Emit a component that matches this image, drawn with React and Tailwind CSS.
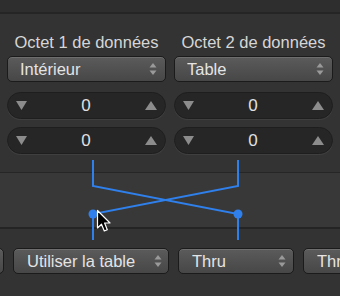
import React from 'react';

const font = { fontFamily: '"Liberation Sans", Arial, sans-serif' };

function Chevrons() {
  return (
    <svg width="8" height="14" viewBox="0 0 8 14" className="shrink-0">
      <path d="M4 1 L7.5 5.5 L0.5 5.5 Z" fill="#9a9a9a" />
      <path d="M4 13 L7.5 8.5 L0.5 8.5 Z" fill="#9a9a9a" />
    </svg>
  );
}

function Popup({ label, className = '' }) {
  return (
    <div
      className={`flex items-center justify-between rounded-[5px] border border-[#1b1b1b] bg-gradient-to-b from-[#5b5b5b] to-[#474747] shadow-[inset_0_1px_0_rgba(255,255,255,0.12)] text-[#e4e4e4] text-[16.5px] leading-none ${className}`}
    >
      <span className="truncate">{label}</span>
      <Chevrons />
    </div>
  );
}

function NumberField({ value }) {
  return (
    <div className="flex h-[27px] items-center justify-between rounded-full border border-[#1e1e1e] bg-[#262626] px-[8px] shadow-[0_1px_0_rgba(255,255,255,0.06)]">
      <svg width="11" height="9" viewBox="0 0 11 9">
        <path d="M0 0 L11 0 L5.5 9 Z" fill="#8c8c8c" />
      </svg>
      <span className="text-[17px] leading-none text-[#e0e0e0]">{value}</span>
      <svg width="12" height="9" viewBox="0 0 12 9">
        <path d="M0 9 L12 9 L6 0 Z" fill="#8c8c8c" />
      </svg>
    </div>
  );
}

function Column({ title, choice }) {
  return (
    <div className="flex flex-col">
      <div className="h-[19px] text-center text-[16.5px] leading-[19px] text-[#d6d6d6]">{title}</div>
      <Popup label={choice} className="mt-[4px] h-[26px] pl-[12px] pr-[8px]" />
      <div className="mt-[10px] flex flex-col gap-[8px]">
        <NumberField value="0" />
        <NumberField value="0" />
      </div>
    </div>
  );
}

export default function App() {
  return (
    <div className="relative h-[296px] w-[340px] overflow-hidden bg-[#333333]" style={font}>
      <div className="h-[14px] border-b-2 border-[#252525] bg-[#2e2e2e]" />

      <div className="grid h-[159px] grid-cols-2 gap-[8px] border-b border-[#262626] px-[7px] pt-[19px]">
        <Column title="Octet 1 de données" choice="Intérieur" />
        <Column title="Octet 2 de données" choice="Table" />
      </div>

      <div className="h-[56px] border-b-2 border-[#242424] bg-[#383838]" />

      <div className="flex gap-[9px] pt-[19px]" style={{ marginLeft: -36 }}>
        <Popup label="" className="h-[26px] w-[40px] shrink-0 pr-[6px]" />
        <Popup label="Utiliser la table" className="h-[26px] w-[156px] shrink-0 pl-[13px] pr-[6px]" />
        <Popup label="Thru" className="h-[26px] w-[116px] shrink-0 pl-[13px] pr-[7px]" />
        <Popup label="Thru" className="h-[26px] w-[116px] shrink-0 pl-[13px] pr-[7px]" />
      </div>

      <svg className="pointer-events-none absolute left-0 top-0" width="340" height="296" viewBox="0 0 340 296">
        <g stroke="#2f80ec" strokeWidth="2" fill="none">
          <path d="M93 160 L93 186 L238 214 L238 240" />
          <path d="M238 160 L238 186 L93 214 L93 240" />
        </g>
        <circle cx="93" cy="214" r="4.5" fill="#2f80ec" />
        <circle cx="238" cy="214" r="4.5" fill="#2f80ec" />
        <path
          d="M97.5 210.5 L97.5 228 L101.5 224.2 L104.3 231 L107.3 229.7 L104.6 223 L110 223 Z"
          fill="#000"
          stroke="#fff"
          strokeWidth="1.2"
          strokeLinejoin="round"
        />
      </svg>
    </div>
  );
}
